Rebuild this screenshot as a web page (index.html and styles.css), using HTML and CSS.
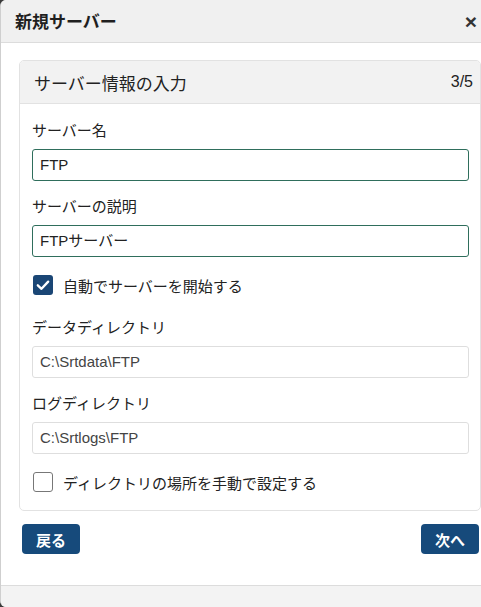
FILE: index.html
```html
<!DOCTYPE html>
<html lang="ja">
<head>
<meta charset="utf-8">
<title>新規サーバー</title>
<link rel="stylesheet" href="styles.css">
</head>
<body>
<div class="dialog">
  <div class="dlg-header">
    <span class="dlg-title">新規サーバー</span>
    <span class="dlg-close">×</span>
  </div>
  <div class="dlg-body">
    <div class="card">
      <div class="card-header">
        <span class="card-title">サーバー情報の入力</span>
        <span class="card-step">3/5</span>
      </div>
      <div class="card-body">
        <div class="field">
          <label class="field-label">サーバー名</label>
          <div class="input input-active">FTP</div>
        </div>
        <div class="field">
          <label class="field-label">サーバーの説明</label>
          <div class="input input-active">FTPサーバー</div>
        </div>
        <div class="check-row">
          <span class="checkbox checked">
            <svg viewBox="0 0 20 20" width="20" height="20"><path d="M4.8 10.3 L8.5 13.8 L15.2 6.6" fill="none" stroke="#fff" stroke-width="2.3" stroke-linecap="round" stroke-linejoin="round"/></svg>
          </span>
          <span class="check-label">自動でサーバーを開始する</span>
        </div>
        <div class="field field-dir">
          <label class="field-label">データディレクトリ</label>
          <div class="input input-ro">C:\Srtdata\FTP</div>
        </div>
        <div class="field">
          <label class="field-label">ログディレクトリ</label>
          <div class="input input-ro">C:\Srtlogs\FTP</div>
        </div>
        <div class="check-row check-row-last">
          <span class="checkbox"></span>
          <span class="check-label">ディレクトリの場所を手動で設定する</span>
        </div>
      </div>
    </div>
    <div class="actions">
      <button class="btn">戻る</button>
      <button class="btn">次へ</button>
    </div>
  </div>
  <div class="dlg-footer"></div>
</div>
</body>
</html>
```

FILE: styles.css
```css
html, body {
  margin: 0;
  padding: 0;
  background: #3a3a3a;
}
body {
  font-family: "Liberation Sans", "Noto Sans CJK JP", Arial, sans-serif;
  color: #222;
}
.dialog {
  width: 480px;
  height: 607px;
  background: #fff;
  border-left: 1px solid #cfcfcf;
  border-radius: 6px 0 0 6px;
  overflow: hidden;
  display: flex;
  flex-direction: column;
}
.dlg-header {
  height: 42px;
  flex: none;
  background: #f0f0f0;
  border-bottom: 1px solid #dcdcdc;
  display: flex;
  align-items: center;
  justify-content: space-between;
  padding: 0 4px 0 14px;
}
.dlg-title {
  font-size: 17px;
  font-weight: bold;
  color: #1f1f1f;
  margin-top: -2px;
}
.dlg-close {
  font-size: 21px;
  font-weight: bold;
  color: #333;
  margin-top: 1px;
}
.dlg-body {
  flex: 1;
  padding: 17px 0 0 18px;
}
.card {
  border: 1px solid #e2e2e2;
  border-radius: 5px;
  overflow: hidden;
}
.card-header {
  height: 42px;
  background: #f2f2f2;
  border-bottom: 1px solid #e2e2e2;
  display: flex;
  align-items: center;
  justify-content: space-between;
  padding: 0 7px 0 14px;
}
.card-title {
  font-size: 17px;
  color: #222;
}
.card-step {
  font-size: 16px;
  color: #222;
}
.card-body {
  padding: 17px 11px 18px 12px;
  display: flex;
  flex-direction: column;
}
.field {
  display: flex;
  flex-direction: column;
  margin-bottom: 16px;
}
.field-dir {
  margin-top: 5px;
}
.field-label {
  font-size: 15px;
  line-height: 20px;
  color: #222;
  margin-bottom: 8px;
}
.input {
  height: 30px;
  border-radius: 3px;
  padding: 0 7px;
  font-size: 15px;
  line-height: 30px;
  box-sizing: content-box;
}
.input-active {
  border: 1px solid #2f6e5c;
  color: #222;
}
.input-ro {
  border: 1px solid #dedede;
  color: #444;
}
.check-row {
  display: flex;
  align-items: center;
  height: 20px;
  margin: 2px 0 18px 1px;
}
.check-row-last {
  margin: 2px 0 0 1px;
}
.checkbox {
  width: 18px;
  height: 18px;
  border: 1px solid #777;
  border-radius: 3px;
  flex: none;
  display: flex;
  align-items: center;
  justify-content: center;
}
.checkbox.checked {
  width: 20px;
  height: 20px;
  border: none;
  background: #1a4675;
}
.check-label {
  font-size: 15px;
  margin-left: 10px;
  color: #222;
}
.actions {
  display: flex;
  justify-content: space-between;
  padding: 13px 2px 0 3px;
}
.btn {
  height: 30px;
  padding: 0 14px;
  border: none;
  border-radius: 4px;
  background: #164a7b;
  color: #fff;
  font-family: "Liberation Sans", "Noto Sans CJK JP", sans-serif;
  font-size: 15px;
  font-weight: bold;
}
.dlg-footer {
  height: 21px;
  flex: none;
  background: #f3f3f3;
  border-top: 1px solid #dcdcdc;
}
```
